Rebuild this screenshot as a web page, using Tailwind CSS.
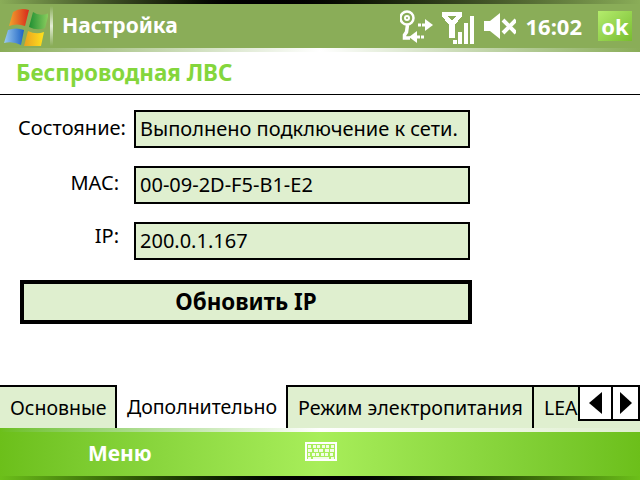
<!DOCTYPE html>
<html lang="ru">
<head>
    <meta charset="UTF-8">
    <title>Настройка</title>
    <script src="https://cdn.jsdelivr.net/npm/@tailwindcss/browser@4"></script>
</head>
<body class="bg-white">
<div class="w-[640px] h-[480px] flex flex-col overflow-hidden font-['Noto_Sans','DejaVu_Sans',sans-serif] text-[20px] text-black">

    <!-- верхняя панель -->
    <div class="h-[4px] bg-gradient-to-r from-[#8aad58] via-[#000000] via-40% to-[#8aad58]"></div>
    <div class="h-[44px] bg-[#8aad58] flex items-center">
        <svg class="w-[44px] h-[40px] ml-[4px]" viewBox="0 0 44 40">
            <defs>
                <linearGradient id="red" x1="0" x2="1" y1="0" y2="0"><stop offset="0" stop-color="#f2a32c"/><stop offset="1" stop-color="#d8281c"/></linearGradient>
                <linearGradient id="green" x1="0" x2="1" y1="0" y2="0"><stop offset="0" stop-color="#1f8f32"/><stop offset="1" stop-color="#8fd060"/></linearGradient>
                <linearGradient id="blue" x1="0" x2="1" y1="0" y2="0"><stop offset="0" stop-color="#9ccbf0"/><stop offset="1" stop-color="#1c62c4"/></linearGradient>
                <linearGradient id="yellow" x1="0" x2="1" y1="0" y2="0"><stop offset="0" stop-color="#e8a020"/><stop offset="1" stop-color="#ffe21c"/></linearGradient>
            </defs>
            <path d="M9 6 Q16 1 25 4 L21 20 Q13 17 5 20 Z" fill="url(#red)"/>
            <path d="M29 6 Q36 11 45 7 L41 22 Q33 25 25 21 Z" fill="url(#green)"/>
            <path d="M4 24 Q12 21 20 24 L17 39 Q9 35 0 37 Z" fill="url(#blue)"/>
            <path d="M24 25 Q32 29 40 26 L37 40 Q29 44 20 40 Z" fill="url(#yellow)"/>
        </svg>
        <div class="w-[3px] h-[40px] ml-[2px] bg-gradient-to-b from-[#8aad58] via-[#e4edd6] to-[#8aad58]"></div>
        <span class="ml-[9px] font-bold text-[21px] text-white">Настройка</span>
        <div class="ml-auto flex items-center">
            <svg class="w-[34px] h-[44px]" viewBox="398 4 34 44" fill="none" stroke="#fff">
                <circle cx="405" cy="18" r="6.500" stroke-width="2.500"/>
                <circle cx="405" cy="18" r="2" stroke-width="2"/>
                <path d="M405.500 25 L404.500 32 L402.500 35 V38 H408" stroke-width="3.500"/>
                <path d="M416 25h3M420 25h4" stroke-width="3"/>
                <path d="M423 19 L431 25 L423 31 Z" fill="#fff" stroke="none"/>
                <path d="M414 37h4M419 37h3" stroke-width="3"/>
                <path d="M415 31 L407 37 L415 43 Z" fill="#fff" stroke="none"/>
            </svg>
            <svg class="w-[32px] h-[44px] ml-[8px]" viewBox="440 4 32 44" fill="#fff" shape-rendering="crispEdges">
                <path d="M440 12 H460 V16 L453 25 V38 H447 V25 L440 16 Z M446 16 L449 20 H451 L454 16 Z" fill-rule="evenodd"/>
                <rect x="451" y="40" width="4" height="4"/>
                <rect x="456" y="32" width="4" height="12"/>
                <rect x="462" y="23" width="4" height="21"/>
                <rect x="468" y="16" width="4" height="28"/>
            </svg>
            <svg class="w-[32px] h-[44px] ml-[10px]" viewBox="482 4 32 44" fill="#fff">
                <path d="M482 21 H488 L498 13 V39 L488 31 H482 Z"/>
                <path d="M501 20 L514 33 M514 20 L501 33" stroke="#fff" stroke-width="4" fill="none"/>
            </svg>
            <span class="ml-[9px] font-bold text-[22px] text-white">16:02</span>
            <div class="ml-[16px] mr-[8px] w-[34px] h-[30px] bg-gradient-to-br from-[#b4ec6c] to-[#78bd2e] flex items-center justify-center font-bold text-[22px] text-white">ok</div>
        </div>
    </div>
    <div class="h-[4px] bg-gradient-to-r from-[#8aad58] via-[#ffffff] to-[#8aad58]"></div>

    <!-- заголовок -->
    <div class="h-[42px] flex items-center pl-[16px] border-b border-black box-content font-bold text-[22.400px] text-[#84d63c]">Беспроводная ЛВС</div>

    <!-- содержимое -->
    <div class="flex-1 flex flex-col pt-[15px] pl-[20px]">
        <div class="flex flex-col gap-[18px]">
            <div class="flex items-start">
                <span class="w-[105px] -ml-[2px] pt-[3px] mr-[11px] text-right leading-[30px]">Состояние:</span>
                <div class="w-[336px] h-[38px] border-[2px] border-black bg-[#dfefcf] pl-[4px] flex items-center">Выполнено подключение к сети.</div>
            </div>
            <div class="flex items-start">
                <span class="w-[99px] pt-[2px] mr-[15px] text-right leading-[30px]">MAC:</span>
                <div class="w-[336px] h-[38px] border-[2px] border-black bg-[#dfefcf] pl-[4px] flex items-center">00-09-2D-F5-B1-E2</div>
            </div>
            <div class="flex items-start">
                <span class="w-[99px] mr-[15px] text-right leading-[28px]">IP:</span>
                <div class="w-[336px] h-[38px] border-[2px] border-black bg-[#dfefcf] pl-[4px] flex items-center">200.0.1.167</div>
            </div>
        </div>
        <button class="mt-[20px] w-[452px] h-[44px] border-[4px] border-black bg-[#dfefcf] font-bold text-[22.400px] leading-[32px]">Обновить IP</button>
    </div>

    <!-- вкладки -->
    <div class="relative h-[43px] flex text-[19.500px]">
        <div class="w-[117px] border-t-[2px] border-r-[2px] border-black bg-[#dfefcf] pl-[10px] flex items-center">Основные</div>
        <div class="w-[169px] bg-white pl-[10px] flex items-center">Дополнительно</div>
        <div class="w-[248px] border-t-[2px] border-l-[2px] border-r-[2px] border-black bg-[#dfefcf] pl-[10px] flex items-center text-[19.700px]">Режим электропитания</div>
        <div class="flex-1 border-t-[2px] border-black bg-[#dfefcf] pl-[10px] flex items-center overflow-hidden">LEAP</div>
        <div class="absolute right-0 top-0 w-[62px] h-[36px] border-[2px] border-black bg-white flex">
            <div class="w-[33px] border-r-[2px] border-black flex items-center justify-center">
                <svg class="w-[13px] h-[22px]" viewBox="0 0 13 22"><path d="M13 0 V22 L0 11 Z" fill="#000"/></svg>
            </div>
            <div class="flex-1 flex items-center justify-center">
                <svg class="w-[12px] h-[22px]" viewBox="0 0 12 22"><path d="M0 0 V22 L12 11 Z" fill="#000"/></svg>
            </div>
        </div>
    </div>

    <!-- нижняя панель -->
    <div class="h-[4px] bg-gradient-to-r from-[#6cbf1a] via-[#ffffff] to-[#dfefcf]"></div>
    <div class="relative h-[44px] bg-gradient-to-r from-[#6cbf1a] via-[#a8ee5a] to-[#6cbf1a] flex items-center">
        <span class="ml-[88px] font-bold text-[21px] text-white">Меню</span>
        <svg class="absolute left-[305px] top-[10px] w-[32px] h-[19px]" viewBox="0 0 32 19" shape-rendering="crispEdges">
            <rect width="32" height="19" rx="1" fill="#fff"/>
            <rect x="2" y="2" width="28" height="15" fill="#a8ee5a"/>
            <g stroke="#f2fce6" stroke-width="3" fill="none">
                <path d="M3 4.500H29" stroke-dasharray="3 1.500"/>
                <path d="M3 8.500H29" stroke-dasharray="4 1.500"/>
                <path d="M3 12.500H29" stroke-dasharray="3 1.500" stroke-dashoffset="1"/>
                <path d="M3 15.500H6M8 15.500H24M26 15.500H29" stroke-width="2"/>
            </g>
        </svg>
    </div>
    <div class="h-[4px] bg-gradient-to-r from-[#6cbf1a] via-[#000000] to-[#6cbf1a]"></div>
</div>
</body>
</html>
